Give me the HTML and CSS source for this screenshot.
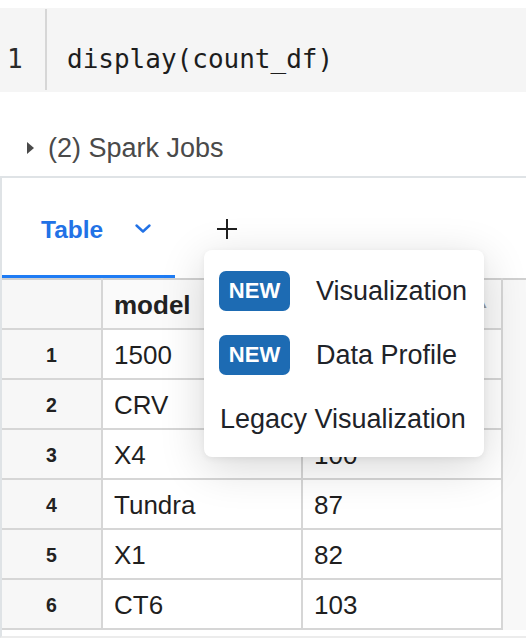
FILE: index.html
```html
<!DOCTYPE html>
<html>
<head>
<meta charset="utf-8">
<link rel="stylesheet" href="styles.css">
</head>
<body>
<div class="code">
  <div class="gutter">1</div>
  <div class="src">display(count_df)</div>
</div>
<div class="jobs"><span class="caret"></span>(2) Spark Jobs</div>
<div class="output">
  <div class="tabs">
    <div class="tab active">Table
      <svg class="chev" width="18" height="11" viewBox="0 0 18 11"><path d="M2.5 2.5 L9 8.5 L15.5 2.5" fill="none" stroke="#2272e6" stroke-width="2.4" stroke-linecap="round" stroke-linejoin="round"/></svg>
    </div>
    <div class="add">
      <svg width="22" height="22" viewBox="0 0 22 22"><path d="M11 1 V21 M1 11 H21" stroke="#1f1f1f" stroke-width="2"/></svg>
    </div>
  </div>
  <div class="grid">
    <table class="data">
      <thead>
        <tr><th class="idx"></th><th>model</th><th class="cnt">count <span class="sort">&#9650;</span></th></tr>
      </thead>
      <tbody>
        <tr><td class="idx">1</td><td>1500</td><td>95</td></tr>
        <tr><td class="idx">2</td><td>CRV</td><td>91</td></tr>
        <tr><td class="idx">3</td><td>X4</td><td>100</td></tr>
        <tr><td class="idx">4</td><td>Tundra</td><td>87</td></tr>
        <tr><td class="idx">5</td><td>X1</td><td>82</td></tr>
        <tr><td class="idx">6</td><td>CT6</td><td>103</td></tr>
      </tbody>
    </table>
    <div class="strip"></div>
  </div>
  <div class="menu">
    <div class="item"><span class="badge">NEW</span><span class="label">Visualization</span></div>
    <div class="item"><span class="badge">NEW</span><span class="label">Data Profile</span></div>
    <div class="item legacy"><span class="label">Legacy Visualization</span></div>
  </div>
</div>
</body>
</html>
```
FILE: styles.css
```css
html, body {
  margin: 0;
  padding: 0;
  background: #ffffff;
  font-family: "Liberation Sans", Arial, sans-serif;
  color: #1f1f1f;
  overflow: hidden;
}

.code {
  margin-top: 8px;
  height: 84px;
  background: #f5f5f5;
  display: flex;
  align-items: stretch;
  font-family: "DejaVu Sans Mono", monospace;
  font-size: 26px;
  color: #1d1d1d;
}
.gutter {
  width: 38px;
  padding-left: 7px;
  margin: 1px 0 2px;
  border-right: 2px solid #d6d6d6;
  display: flex;
  align-items: center;
  padding-top: 18px;
  color: #2a2a2a;
}
.src {
  padding-left: 20px;
  display: flex;
  align-items: center;
  padding-top: 18px;
}

.jobs {
  margin-top: 34px;
  height: 44px;
  display: flex;
  align-items: center;
  font-size: 27px;
  color: #4a4a4a;
  padding-left: 27px;
}
.caret {
  width: 0;
  height: 0;
  border-left: 7px solid #4a4a4a;
  border-top: 6px solid transparent;
  border-bottom: 6px solid transparent;
  margin-right: 14px;
}

.output {
  position: relative;
  margin-top: 6px;
  border-top: 2px solid #dfe3e6;
  border-left: 2px solid #dfe3e6;
  border-bottom: 2px solid #ececec;
  padding-bottom: 6px;
}
.tabs {
  height: 100px;
  display: flex;
  align-items: stretch;
}
.tab {
  padding-left: 39px;
  display: flex;
  align-items: center;
  color: #2272e6;
  font-weight: bold;
  font-size: 24.5px;
  border-bottom: 3px solid #1f7cf4;
  box-sizing: border-box;
  width: 173px;
  padding-top: 6px;
}
.chev {
  margin-left: 31px;
  margin-top: -2px;
}
.add {
  margin-left: 41px;
  display: flex;
  align-items: center;
  padding-top: 2px;
}

.grid {
  display: flex;
  align-items: stretch;
}
.data {
  border-collapse: collapse;
  width: 501px;
  table-layout: fixed;
  font-size: 26px;
}
.data th, .data td {
  height: 50px;
  border: 2px solid #d6d6d6;
  padding: 2px 0 0 11px;
  text-align: left;
  box-sizing: border-box;
  background: #ffffff;
}
.data tr:first-child th {
  border-top: 2px solid #d0d0d0;
}
.data th:first-child, .data td:first-child {
  border-left: none;
}
.data th {
  font-weight: bold;
  background: #fafafa;
  color: #222;
}
.data .idx {
  width: 100px;
  padding: 2px 0 0;
  text-align: center;
  background: #f7f7f7;
  font-size: 19.5px;
  font-weight: bold;
  color: #222;
}
.data th.cnt {
  position: relative;
}
.sort {
  position: absolute;
  right: 12px;
  top: 17px;
  font-size: 12px;
  color: #9a9a9a;
}
.strip {
  flex: 1;
  background: #f8f8f8;
  border-top: 2px solid #d0d0d0;
}

.menu {
  position: absolute;
  left: 202px;
  top: 72px;
  width: 280px;
  height: 207px;
  background: #ffffff;
  border-radius: 8px;
  box-shadow: 0 10px 45px rgba(0, 0, 0, 0.16), 0 2px 6px rgba(0, 0, 0, 0.06);
  box-sizing: border-box;
  padding: 21px 15px 0;
  color: #1e2329;
  font-size: 27px;
}
.item {
  display: flex;
  align-items: center;
  height: 40px;
  margin-bottom: 24px;
}
.badge {
  width: 71px;
  height: 40px;
  border-radius: 7px;
  background: #1d6bb3;
  color: #ffffff;
  font-weight: bold;
  font-size: 22px;
  display: flex;
  align-items: center;
  justify-content: center;
  margin-right: 26px;
}
.legacy {
  margin-top: 24px;
  padding-left: 1px;
}
```
